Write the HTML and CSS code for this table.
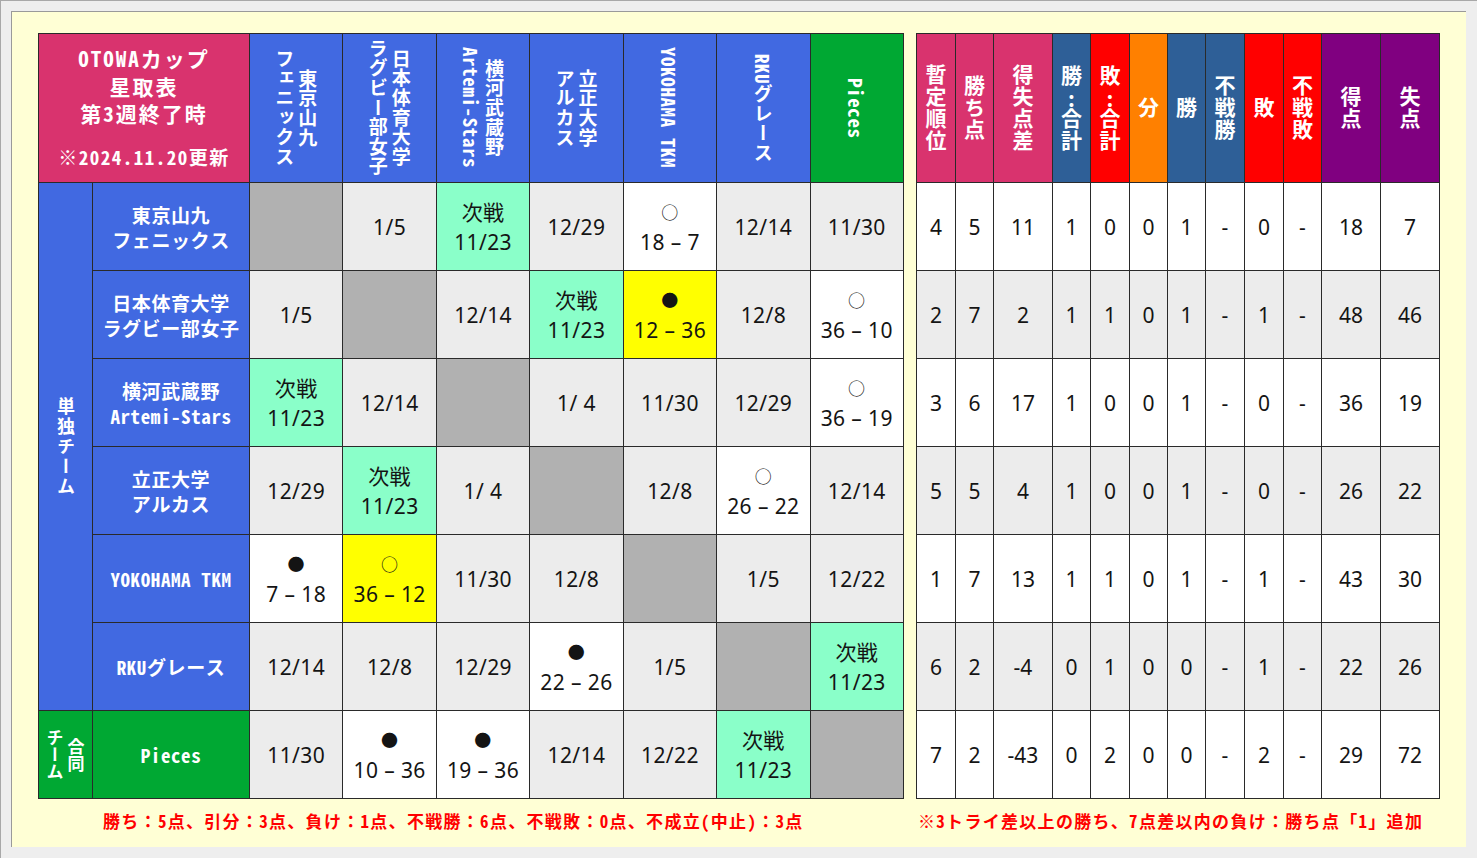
FILE: index.html
```html
<!DOCTYPE html>
<html lang="ja">
<head>
<meta charset="utf-8">
<title>OTOWAカップ 星取表</title>
<link rel="stylesheet" href="styles.css">
</head>
<body>
<div class="panel">
  <div class="tables">
    <div class="grid grid-left">
      <div class="corner">
        <div class="corner-line">OTOWAカップ</div>
        <div class="corner-line">星取表</div>
        <div class="corner-line">第3週終了時</div>
        <div class="corner-date">※2024.11.20更新</div>
      </div>
      <div class="th blue"><span class="vt">東京山九<br>フェニックス</span></div>
      <div class="th blue"><span class="vt">日本体育大学<br>ラグビー部女子</span></div>
      <div class="th blue"><span class="vt">横河武蔵野<br>Artemi-Stars</span></div>
      <div class="th blue"><span class="vt">立正大学<br>アルカス</span></div>
      <div class="th blue"><span class="vt">YOKOHAMA TKM</span></div>
      <div class="th blue"><span class="vt">RKUグレース</span></div>
      <div class="th green"><span class="vt">Pieces</span></div>

      <div class="group blue"><span class="vt">単独チーム</span></div>
      <div class="team blue">東京山九<br>フェニックス</div>
      <div class="c diag"></div>
      <div class="c">1/5</div>
      <div class="c next"><span>次戦</span><span>11/23</span></div>
      <div class="c">12/29</div>
      <div class="c res"><span class="mark">○</span><span>18 – 7</span></div>
      <div class="c">12/14</div>
      <div class="c">11/30</div>

      <div class="team blue">日本体育大学<br>ラグビー部女子</div>
      <div class="c">1/5</div>
      <div class="c diag"></div>
      <div class="c">12/14</div>
      <div class="c next"><span>次戦</span><span>11/23</span></div>
      <div class="c res hl"><span class="mark">●</span><span>12 – 36</span></div>
      <div class="c">12/8</div>
      <div class="c res"><span class="mark">○</span><span>36 – 10</span></div>

      <div class="team blue">横河武蔵野<br>Artemi-Stars</div>
      <div class="c next"><span>次戦</span><span>11/23</span></div>
      <div class="c">12/14</div>
      <div class="c diag"></div>
      <div class="c">1/ 4</div>
      <div class="c">11/30</div>
      <div class="c">12/29</div>
      <div class="c res"><span class="mark">○</span><span>36 – 19</span></div>

      <div class="team blue">立正大学<br>アルカス</div>
      <div class="c">12/29</div>
      <div class="c next"><span>次戦</span><span>11/23</span></div>
      <div class="c">1/ 4</div>
      <div class="c diag"></div>
      <div class="c">12/8</div>
      <div class="c res"><span class="mark">○</span><span>26 – 22</span></div>
      <div class="c">12/14</div>

      <div class="team blue">YOKOHAMA TKM</div>
      <div class="c res"><span class="mark">●</span><span>7 – 18</span></div>
      <div class="c res hl"><span class="mark">○</span><span>36 – 12</span></div>
      <div class="c">11/30</div>
      <div class="c">12/8</div>
      <div class="c diag"></div>
      <div class="c">1/5</div>
      <div class="c">12/22</div>

      <div class="team blue">RKUグレース</div>
      <div class="c">12/14</div>
      <div class="c">12/8</div>
      <div class="c">12/29</div>
      <div class="c res"><span class="mark">●</span><span>22 – 26</span></div>
      <div class="c">1/5</div>
      <div class="c diag"></div>
      <div class="c next"><span>次戦</span><span>11/23</span></div>

      <div class="group group-joint green"><span class="vt">合同<br>チーム</span></div>
      <div class="team green">Pieces</div>
      <div class="c">11/30</div>
      <div class="c res"><span class="mark">●</span><span>10 – 36</span></div>
      <div class="c res"><span class="mark">●</span><span>19 – 36</span></div>
      <div class="c">12/14</div>
      <div class="c">12/22</div>
      <div class="c next"><span>次戦</span><span>11/23</span></div>
      <div class="c diag"></div>
    </div>

    <div class="grid grid-right">
      <div class="row">
        <div class="h magenta"><span class="vt">暫定順位</span></div>
        <div class="h magenta"><span class="vt">勝ち点</span></div>
        <div class="h magenta"><span class="vt">得失点差</span></div>
        <div class="h navy"><span class="vt">勝<span class="tcy">:</span>合計</span></div>
        <div class="h red"><span class="vt">敗<span class="tcy">:</span>合計</span></div>
        <div class="h orange"><span class="vt">分</span></div>
        <div class="h navy"><span class="vt">勝</span></div>
        <div class="h navy"><span class="vt">不戦勝</span></div>
        <div class="h red"><span class="vt">敗</span></div>
        <div class="h red"><span class="vt">不戦敗</span></div>
        <div class="h purple"><span class="vt">得点</span></div>
        <div class="h purple"><span class="vt">失点</span></div>
      </div>
      <div class="row">
        <div>4</div><div>5</div><div>11</div><div>1</div><div>0</div><div>0</div><div>1</div><div>-</div><div>0</div><div>-</div><div>18</div><div>7</div>
      </div>
      <div class="row alt">
        <div>2</div><div>7</div><div>2</div><div>1</div><div>1</div><div>0</div><div>1</div><div>-</div><div>1</div><div>-</div><div>48</div><div>46</div>
      </div>
      <div class="row">
        <div>3</div><div>6</div><div>17</div><div>1</div><div>0</div><div>0</div><div>1</div><div>-</div><div>0</div><div>-</div><div>36</div><div>19</div>
      </div>
      <div class="row alt">
        <div>5</div><div>5</div><div>4</div><div>1</div><div>0</div><div>0</div><div>1</div><div>-</div><div>0</div><div>-</div><div>26</div><div>22</div>
      </div>
      <div class="row">
        <div>1</div><div>7</div><div>13</div><div>1</div><div>1</div><div>0</div><div>1</div><div>-</div><div>1</div><div>-</div><div>43</div><div>30</div>
      </div>
      <div class="row alt">
        <div>6</div><div>2</div><div>-4</div><div>0</div><div>1</div><div>0</div><div>0</div><div>-</div><div>1</div><div>-</div><div>22</div><div>26</div>
      </div>
      <div class="row">
        <div>7</div><div>2</div><div>-43</div><div>0</div><div>2</div><div>0</div><div>0</div><div>-</div><div>2</div><div>-</div><div>29</div><div>72</div>
      </div>
    </div>
  </div>

  <div class="notes">
    <p class="note note-left">勝ち：5点、引分：3点、負け：1点、不戦勝：6点、不戦敗：0点、不成立(中止)：3点</p>
    <p class="note note-right">※3トライ差以上の勝ち、7点差以内の負け：勝ち点「1」追加</p>
  </div>
</div>
</body>
</html>
```

FILE: styles.css
```css
html {
  background: #eeeeee;
}

body {
  margin: 0;
  padding: 10px;
  height: 858px;
  box-sizing: border-box;
  border-top: 1px solid #a8a8a8;
  border-left: 1px solid #a8a8a8;
  font-family: "Noto Sans CJK JP", sans-serif;
}

.panel {
  width: 1455px;
  height: 836px;
  box-sizing: border-box;
  background: #ffffd5;
  border-top: 1px solid #9a9a9a;
  border-left: 1px solid #9a9a9a;
  padding: 21px 0 0 26px;
}

.tables {
  display: flex;
  align-items: flex-start;
  gap: 12px;
}

.grid {
  display: grid;
  gap: 1px;
  background: #2a2a2a;
  border: 1px solid #2a2a2a;
  grid-template-rows: 148px repeat(7, 87px);
}

.grid-left {
  width: 866px;
  box-sizing: border-box;
  grid-template-columns: 53px 156px repeat(7, 1fr);
}

.grid-right {
  grid-template-columns: 38px 37px 58px 37px 38px 37px 37px 38px 38px 37px 58px 58px;
}

.row {
  display: contents;
}

/* colours */
.blue { background: #4169e1; }
.green { background: #00a833; }
.magenta { background: #d9336e; }
.navy { background: #2e5f97; }
.red { background: #ff0000; }
.orange { background: #ff8000; }
.purple { background: #800080; }

/* vertical text */
.vt {
  writing-mode: vertical-rl;
  text-orientation: mixed;
  text-align: center;
}

.tcy {
  text-combine-upright: all;
}

/* corner header */
.corner {
  grid-column: span 2;
  background: #d9336e;
  color: #ffffff;
  font-family: "Noto Sans Mono CJK JP", "Noto Sans CJK JP", sans-serif;
  font-weight: 700;
  text-align: center;
  display: flex;
  flex-direction: column;
  justify-content: flex-start;
  padding-top: 11px;
}

.corner-line {
  font-size: 21px;
  line-height: 27.5px;
  letter-spacing: 2px;
}

.corner-date {
  margin-top: 17px;
  font-size: 19px;
  line-height: 24px;
  letter-spacing: 1.5px;
}

/* team column headers */
.th {
  color: #ffffff;
  font-family: "Noto Sans Mono CJK JP", "Noto Sans CJK JP", sans-serif;
  font-weight: 700;
  font-size: 19px;
  line-height: 23px;
  letter-spacing: 0.6px;
  display: flex;
  align-items: center;
  justify-content: center;
}

/* group labels */
.group {
  grid-row: span 6;
  color: #ffffff;
  font-weight: 700;
  font-size: 18px;
  line-height: 21px;
  letter-spacing: 2px;
  display: flex;
  align-items: center;
  justify-content: center;
}

.group-joint {
  grid-row: span 1;
  font-size: 17px;
  letter-spacing: 0;
}

/* team names */
.team {
  color: #ffffff;
  font-family: "Noto Sans Mono CJK JP", "Noto Sans CJK JP", sans-serif;
  font-weight: 700;
  font-size: 19px;
  line-height: 25px;
  letter-spacing: 0.6px;
  display: flex;
  align-items: center;
  justify-content: center;
  text-align: center;
}

/* match cells */
.c {
  background: #ececec;
  color: #141414;
  font-family: "Noto Sans", "Noto Sans CJK JP", sans-serif;
  font-size: 21px;
  line-height: 30px;
  letter-spacing: 0.4px;
  display: flex;
  flex-direction: column;
  align-items: center;
  justify-content: center;
  white-space: pre;
}

.c.diag { background: #b1b1b1; }
.c.res { background: #ffffff; }
.c.hl { background: #ffff00; }
.c.next { background: #8affc9; }

.mark {
  font-family: "Noto Sans CJK JP", sans-serif;
  font-size: 17px;
}

/* right table */
.h {
  color: #ffffff;
  font-weight: 700;
  font-size: 21px;
  line-height: 24px;
  letter-spacing: 1px;
  display: flex;
  align-items: center;
  justify-content: center;
}

.row > div:not(.h) {
  background: #ffffff;
  color: #141414;
  font-family: "Noto Sans", "Noto Sans CJK JP", sans-serif;
  font-size: 21px;
  display: flex;
  align-items: center;
  justify-content: center;
}

.row.alt > div {
  background: #ececec;
}

/* notes */
.notes {
  display: flex;
  gap: 12px;
  margin-top: 10px;
}

.note {
  margin: 0;
  color: #ff0000;
  font-family: "Noto Sans Mono CJK JP", "Noto Sans CJK JP", sans-serif;
  font-weight: 700;
  font-size: 17px;
  line-height: 24px;
  letter-spacing: 1.3px;
  white-space: nowrap;
}

.note-left {
  width: 866px;
  box-sizing: border-box;
  padding-left: 65px;
}

.note-right {
  padding-left: 2px;
}
```
